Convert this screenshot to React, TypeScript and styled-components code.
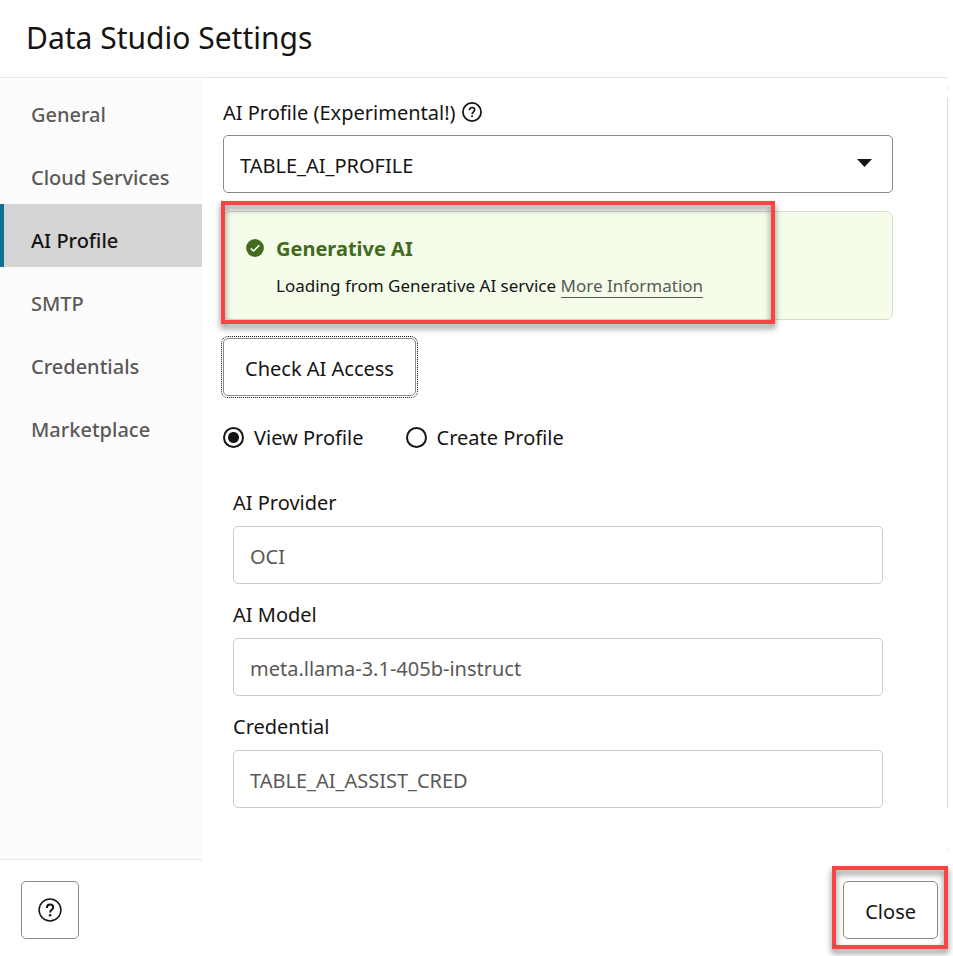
import React, { useState } from "react";
import styled, { createGlobalStyle, css } from "styled-components";

const GlobalStyle = createGlobalStyle`
  *, *::before, *::after { box-sizing: border-box; }
  body { margin: 0; background: #fff; }
  body, button, input, select {
    font-family: "Noto Sans", "Open Sans", sans-serif;
    font-size: 20px;
    color: #161513;
  }
`;

const Dialog = styled.div`
  display: flex;
  flex-direction: column;
  min-height: 100vh;
  padding-right: 5px;
`;

const Header = styled.header`
  height: 78px;
  padding: 16px 26px 0;
  border-bottom: 1px solid #e4e4e4;
`;

const Title = styled.h1`
  margin: 0;
  font-size: 30px;
  line-height: 44px;
  font-weight: 400;
`;

const Body = styled.div`
  display: flex;
  flex: 1;
`;

const Nav = styled.nav`
  flex: 0 0 202px;
  background: #fcfcfc;
  border-bottom: 1px solid #e4e4e4;
`;

const NavItem = styled.button<{ $active: boolean }>`
  display: block;
  width: 100%;
  height: 63px;
  padding: 10px 0 0 27px;
  border: 0;
  border-left: 4px solid transparent;
  background: transparent;
  color: #5b5957;
  font-weight: 500;
  text-align: left;
  cursor: pointer;
  ${(p) =>
    p.$active &&
    css`
      border-left-color: #117092;
      background: #d5d5d5;
      color: #161513;
    `}
`;

const Content = styled.main`
  position: relative;
  flex: 1;
  min-width: 0;
  display: flex;
  flex-direction: column;
  margin: 20px 0 52px;
  padding: 0 54px 0 21px;
  border-right: 1px solid #dcdcdc;
  &::before,
  &::after {
    content: "";
    position: absolute;
    right: -1px;
    width: 1px;
    height: 2px;
    background: #dcdcdc;
  }
  &::before {
    top: -11px;
  }
  &::after {
    bottom: -43px;
  }
`;

const LabelRow = styled.div`
  display: flex;
  align-items: center;
  gap: 6px;
  height: 28px;
  margin-bottom: 9px;
`;

const HelpButton = styled.button`
  display: flex;
  padding: 0;
  border: 0;
  background: none;
`;

const SelectWrap = styled.div`
  position: relative;
  margin-bottom: 18px;
`;

const Select = styled.select`
  display: block;
  width: 100%;
  height: 58px;
  padding: 2px 48px 0 16px;
  border: 1px solid #8b8986;
  border-radius: 5px;
  background: #fff;
  appearance: none;
`;

const Caret = styled.svg`
  position: absolute;
  right: 21px;
  top: 24px;
  pointer-events: none;
`;

const Alert = styled.section`
  position: relative;
  display: grid;
  grid-template-columns: 18px 1fr;
  grid-template-rows: 28px 24px;
  gap: 9px 12px;
  height: 109px;
  padding: 23px 22px;
  border: 1px solid #d5dec9;
  border-radius: 7px;
  background: #f3fdea;
  margin-bottom: 18px;
`;

const AlertIcon = styled.svg`
  margin-top: 4px;
`;

const AlertTitle = styled.h2`
  margin: 0;
  font-size: 20px;
  line-height: 28px;
  font-weight: 700;
  color: #436b1d;
`;

const AlertText = styled.p`
  grid-column: 2;
  margin: 0;
  padding-top: 2px;
  font-size: 17px;
  line-height: 24px;
`;

const Link = styled.a`
  color: #5b5957;
  text-decoration: none;
  border-bottom: 1px solid #5b5957;
`;

const Highlight = styled.div`
  position: absolute;
  border: 4px solid #fc4343;
  filter: drop-shadow(0 4px 3px rgba(0, 0, 0, 0.5));
  pointer-events: none;
`;

const AlertHighlight = styled(Highlight)`
  inset: -11px 117px -5px -3px;
`;

const CloseHighlight = styled(Highlight)`
  inset: -15px -10px -10px -11px;
`;

const Button = styled.button<{ $focused?: boolean }>`
  height: 58px;
  padding: 3px 21px 0;
  border: 1px solid #8b8986;
  border-radius: 5px;
  background: #fff;
  cursor: pointer;
  ${(p) =>
    p.$focused &&
    css`
      align-self: flex-start;
      outline: 1px dotted #161513;
      outline-offset: 1px;
    `}
`;

const IconButton = styled(Button)`
  display: flex;
  align-items: center;
  justify-content: center;
  width: 58px;
  padding: 0;
`;

const Radios = styled.div`
  display: flex;
  gap: 42px;
  margin: 28px 0 0;
`;

const RadioLabel = styled.label`
  display: flex;
  align-items: center;
  gap: 10px;
  line-height: 28px;
`;

const Radio = styled.input`
  appearance: none;
  width: 21px;
  height: 21px;
  margin: 0 0 2px;
  border: 2px solid #161513;
  border-radius: 50%;
  background: #fff;
  &:checked {
    background: radial-gradient(circle, #161513 5px, #fff 6px);
  }
`;

const Fields = styled.div`
  display: flex;
  flex-direction: column;
  gap: 17px;
  padding: 37px 10px 0;
`;

const Field = styled.div`
  display: flex;
  flex-direction: column;
  gap: 9px;
  line-height: 28px;
`;

const TextBox = styled.input`
  width: 100%;
  height: 58px;
  padding: 2px 16px 0;
  border: 1px solid #cccbca;
  border-radius: 5px;
  background: #fff;
  color: #5b5957;
`;

const Footer = styled.footer`
  display: flex;
  align-items: flex-start;
  justify-content: space-between;
  height: 96px;
  padding: 21px 10px 0 21px;
`;

const CloseWrap = styled.div`
  position: relative;
`;

function HelpIcon({ size, stroke }: { size: number; stroke: number }) {
  return (
    <svg width={size} height={size} viewBox="0 0 24 24" fill="none" stroke="#161513" strokeWidth={stroke}>
      <circle cx="12" cy="12" r="10.9" />
      <path d="M8.9 9.9c0-2 1.4-3.3 3.2-3.3 1.8 0 3.1 1.2 3.1 2.8 0 2.4-3.1 2.4-3.1 5.2" strokeWidth="2" />
      <circle cx="12.1" cy="17.2" r="1.2" fill="#161513" stroke="none" />
    </svg>
  );
}

const sections = ["General", "Cloud Services", "AI Profile", "SMTP", "Credentials", "Marketplace"];

const fields = [
  { id: "provider", label: "AI Provider", value: "OCI" },
  { id: "model", label: "AI Model", value: "meta.llama-3.1-405b-instruct" },
  { id: "credential", label: "Credential", value: "TABLE_AI_ASSIST_CRED" },
];

export default function App() {
  const [section, setSection] = useState("AI Profile");
  const [mode, setMode] = useState("View Profile");

  return (
    <>
      <GlobalStyle />
      <Dialog>
        <Header>
          <Title>Data Studio Settings</Title>
        </Header>
        <Body>
          <Nav>
            {sections.map((name) => (
              <NavItem key={name} $active={name === section} onClick={() => setSection(name)}>
                {name}
              </NavItem>
            ))}
          </Nav>
          <Content>
            <LabelRow>
              <label htmlFor="profile">AI Profile (Experimental!)</label>
              <HelpButton aria-label="About AI profiles">
                <HelpIcon size={20} stroke={2.1} />
              </HelpButton>
            </LabelRow>
            <SelectWrap>
              <Select id="profile">
                <option>TABLE_AI_PROFILE</option>
              </Select>
              <Caret width="15" height="8" viewBox="0 0 15 8">
                <path d="M0 0h15L7.5 8z" fill="#161513" />
              </Caret>
            </SelectWrap>
            <Alert>
              <AlertIcon width="18" height="18" viewBox="0 0 18 18">
                <circle cx="9" cy="9" r="8.9" fill="#436b1d" />
                <path d="M4.7 9.3l2.8 2.7 5.800-5.800" fill="none" stroke="#f3fdea" strokeWidth="1.6" />
              </AlertIcon>
              <AlertTitle>Generative AI</AlertTitle>
              <AlertText>
                Loading from Generative AI service <Link href="#more">More Information</Link>
              </AlertText>
              <AlertHighlight />
            </Alert>
            <Button $focused>Check AI Access</Button>
            <Radios>
              {["View Profile", "Create Profile"].map((name) => (
                <RadioLabel key={name}>
                  <Radio type="radio" name="mode" checked={mode === name} onChange={() => setMode(name)} />
                  {name}
                </RadioLabel>
              ))}
            </Radios>
            <Fields>
              {fields.map((f) => (
                <Field key={f.id}>
                  <label htmlFor={f.id}>{f.label}</label>
                  <TextBox id={f.id} value={f.value} readOnly />
                </Field>
              ))}
            </Fields>
          </Content>
        </Body>
        <Footer>
          <IconButton aria-label="Help">
            <HelpIcon size={24} stroke={1.5} />
          </IconButton>
          <CloseWrap>
            <Button>Close</Button>
            <CloseHighlight />
          </CloseWrap>
        </Footer>
      </Dialog>
    </>
  );
}
